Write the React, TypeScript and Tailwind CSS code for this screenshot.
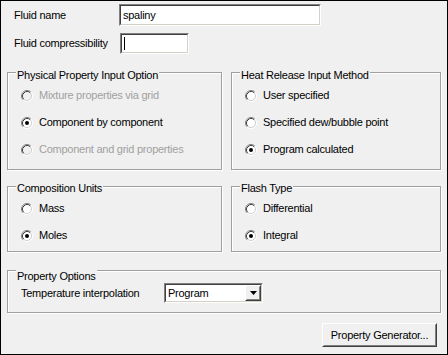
import type { ReactNode } from "react"

const font = { fontFamily: '"Liberation Sans", Arial, sans-serif' }

function Radio({ checked, disabled }: { checked?: boolean; disabled?: boolean }) {
  return (
    <svg width="12" height="12" viewBox="0 0 12 12" className="shrink-0">
      <circle cx="6" cy="6" r="4.5" fill={disabled ? "#f0f0f0" : "#ffffff"} />
      <path d="M2.11 9.89 A5.5 5.5 0 0 1 9.89 2.11" stroke="#808080" fill="none" />
      <path d="M2.82 9.18 A4.5 4.5 0 0 1 9.18 2.82" stroke="#404040" fill="none" />
      <path d="M9.89 2.11 A5.5 5.5 0 0 1 2.11 9.89" stroke="#ffffff" fill="none" />
      <path d="M9.18 2.82 A4.5 4.5 0 0 1 2.82 9.18" stroke="#d4d0c8" fill="none" />
      {checked && <circle cx="6" cy="6" r="2" fill={disabled ? "#a0a0a0" : "#000000"} />}
    </svg>
  )
}

function Option({ label, checked, disabled }: { label: string; checked?: boolean; disabled?: boolean }) {
  return (
    <div className="flex h-[27px] items-center gap-[6px] pl-[13px]">
      <Radio checked={checked} disabled={disabled} />
      <span className={disabled ? "text-[#a0a0a0]" : "text-black"}>{label}</span>
    </div>
  )
}

function Group({ title, className, children }: { title: string; className?: string; children: ReactNode }) {
  return (
    <div
      className={`flex flex-col border border-[#a0a0a0] shadow-[inset_1px_1px_0_#ffffff,1px_1px_0_#ffffff] ${className ?? ""}`}
    >
      <span className="ml-[8px] -mt-[7px] h-[13px] self-start bg-[#f0f0f0] px-[1px] leading-[13px]">{title}</span>
      {children}
    </div>
  )
}

function Sunken({ className, children }: { className?: string; children?: ReactNode }) {
  return (
    <div
      className={`shrink-0 border border-t-[#808080] border-l-[#808080] border-b-white border-r-white ${className ?? ""}`}
    >
      <div className="flex h-full w-full items-center border border-t-[#404040] border-l-[#404040] border-b-[#d4d0c8] border-r-[#d4d0c8] bg-white">
        {children}
      </div>
    </div>
  )
}

export default function App() {
  return (
    <div
      className="flex h-[355px] w-[448px] flex-col border border-black bg-[#f0f0f0] text-[11px] leading-[13px] tracking-[-0.25px] text-black"
      style={font}
    >
      <div className="mt-[3px] flex h-[22px] items-center">
        <span className="w-[118px] shrink-0 whitespace-nowrap pl-[13px]">Fluid name</span>
        <Sunken className="h-[22px] w-[202px]">
          <span className="pl-[2px]">spaliny</span>
        </Sunken>
      </div>
      <div className="mt-[7px] flex h-[21px] items-center">
        <span className="w-[119px] shrink-0 whitespace-nowrap pl-[13px]">Fluid compressibility</span>
        <Sunken className="h-[21px] w-[69px]">
          <span className="ml-[2px] h-[13px] w-px bg-black" />
        </Sunken>
      </div>

      <div className="mx-[6px] mt-[18px] grid grid-cols-[215px_210px] gap-x-[9px]">
        <Group title="Physical Property Input Option" className="pt-[3px] pb-[6px]">
          <Option label="Mixture properties via grid" disabled />
          <Option label="Component by component" checked />
          <Option label="Component and grid properties" disabled />
        </Group>
        <Group title="Heat Release Input Method" className="pt-[3px] pb-[6px]">
          <Option label="User specified" />
          <Option label="Specified dew/bubble point" />
          <Option label="Program calculated" checked />
        </Group>
      </div>

      <div className="mx-[6px] mt-[16px] grid grid-cols-[215px_210px] gap-x-[9px]">
        <Group title="Composition Units" className="pt-[2px] pb-[2px]">
          <Option label="Mass" />
          <Option label="Moles" checked />
        </Group>
        <Group title="Flash Type" className="pt-[2px] pb-[2px]">
          <Option label="Differential" />
          <Option label="Integral" checked />
        </Group>
      </div>

      <Group title="Property Options" className="mx-[6px] mt-[18px] pt-[6px] pb-[9px]">
        <div className="flex h-[20px] items-center">
          <span className="w-[156px] shrink-0 whitespace-nowrap pl-[13px]">Temperature interpolation</span>
          <Sunken className="h-[20px] w-[99px]">
            <span className="flex-1 pl-[2px]">Program</span>
            <div className="h-[16px] w-[16px] border border-t-white border-l-white border-b-[#404040] border-r-[#404040]">
              <div className="flex h-full w-full items-center justify-center border border-t-[#f0f0f0] border-l-[#f0f0f0] border-b-[#808080] border-r-[#808080] bg-[#f0f0f0]">
                <svg width="7" height="4" viewBox="0 0 7 4">
                  <polygon points="0,0 7,0 3.5,4" fill="#000" />
                </svg>
              </div>
            </div>
          </Sunken>
        </div>
      </Group>

      <div className="mr-[10px] mt-[10px] flex justify-end">
        <button className="h-[24px] w-[115px] border border-t-white border-l-white border-b-[#404040] border-r-[#404040] bg-[#f0f0f0] p-0">
          <div className="flex h-full w-full items-center justify-center border border-t-[#f0f0f0] border-l-[#f0f0f0] border-b-[#808080] border-r-[#808080]">
            Property Generator...
          </div>
        </button>
      </div>
    </div>
  )
}
